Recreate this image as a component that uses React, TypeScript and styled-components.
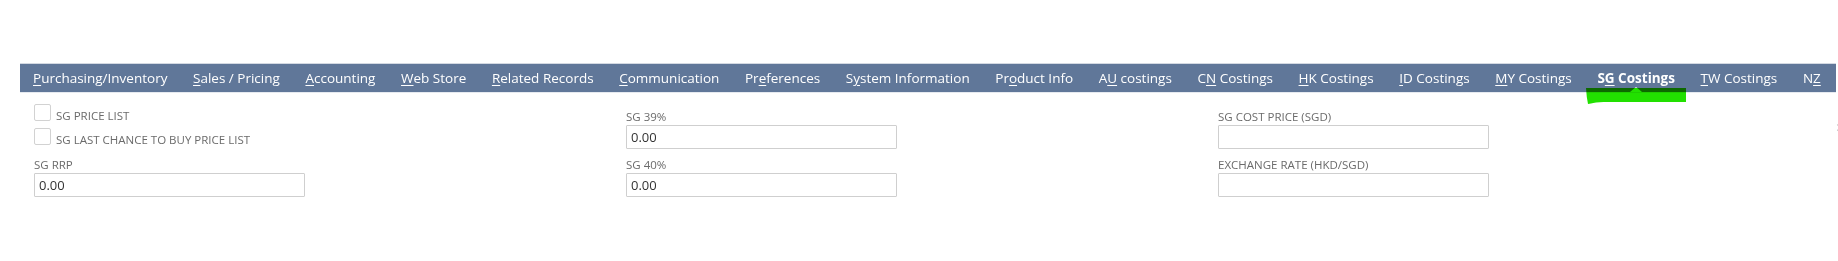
import styled, { createGlobalStyle } from "styled-components";

const GlobalStyle = createGlobalStyle`
  html, body {
    margin: 0;
    padding: 0;
    background: #fff;
    font-family: "Open Sans", "Liberation Sans", sans-serif;
  }
`;

// key = index of the access-key letter that gets underlined
const tabs: { label: string; key: number; active?: boolean }[] = [
  { label: "Purchasing/Inventory", key: 0 },
  { label: "Sales / Pricing", key: 0 },
  { label: "Accounting", key: 0 },
  { label: "Web Store", key: 0 },
  { label: "Related Records", key: 0 },
  { label: "Communication", key: 0 },
  { label: "Preferences", key: 2 },
  { label: "System Information", key: 1 },
  { label: "Product Info", key: 2 },
  { label: "AU costings", key: 1 },
  { label: "CN Costings", key: 1 },
  { label: "HK Costings", key: 0 },
  { label: "ID Costings", key: 0 },
  { label: "MY Costings", key: 0 },
  { label: "SG Costings", key: 1, active: true },
  { label: "TW Costings", key: 0 },
  { label: "NZ", key: 1 },
];

const App = () => {
  return (
    <>
      <GlobalStyle />
      <Page>
        <TabBar>
          {tabs.map((t) => (
            <Tab key={t.label} $active={t.active}>
              {t.label.slice(0, t.key)}
              <u>{t.label.charAt(t.key)}</u>
              {t.label.slice(t.key + 1)}
            </Tab>
          ))}
        </TabBar>

        <Form>
          <Column>
            <CheckRow>
              <CheckBox />
              <CheckLabel>SG PRICE LIST</CheckLabel>
            </CheckRow>
            <CheckRow>
              <CheckBox />
              <CheckLabel>SG LAST CHANCE TO BUY PRICE LIST</CheckLabel>
            </CheckRow>
            <Field $offset={5}>
              <FieldLabel>SG RRP</FieldLabel>
              <Input defaultValue="0.00" />
            </Field>
          </Column>

          <Column $padTop={5}>
            <Field>
              <FieldLabel>SG 39%</FieldLabel>
              <Input defaultValue="0.00" />
            </Field>
            <Field>
              <FieldLabel>SG 40%</FieldLabel>
              <Input defaultValue="0.00" />
            </Field>
          </Column>

          <Column $padTop={5}>
            <Field>
              <FieldLabel>SG COST PRICE (SGD)</FieldLabel>
              <Input defaultValue="" />
            </Field>
            <Field>
              <FieldLabel>EXCHANGE RATE (HKD/SGD)</FieldLabel>
              <Input defaultValue="" />
            </Field>
          </Column>
        </Form>

        <EdgeArrow>›</EdgeArrow>

        <Marker width="100" height="16" viewBox="0 0 100 16">
          <path d="M0 0 H100 V14 H22 Q10 13.5 5 15.5 L2 16 Q0.5 9 0 0 Z" fill="#22e000" />
        </Marker>
      </Page>
    </>
  );
};

export default App;

const Page = styled.div`
  position: relative;
  width: 1838px;
  height: 261px;
  padding-top: 63px;
  box-sizing: border-box;
  overflow: hidden;
`;

const TabBar = styled.div`
  display: flex;
  gap: 25.6px;
  margin: 0 2px 0 20px;
  padding-left: 13px;
  height: 28px;
  background: #607799;
  border-top: 1px solid #d3d9e2;
  border-bottom: 1px solid #e6eaf0;
  overflow: hidden;
  white-space: nowrap;
`;

const Tab = styled.div<{ $active?: boolean }>`
  position: relative;
  flex: none;
  padding-top: 1px;
  color: #fff;
  font-size: 13.5px;
  line-height: 27px;
  font-weight: ${(p) => (p.$active ? 700 : 400)};

  u {
    text-decoration-thickness: 1px;
    text-underline-offset: 2px;
  }

  &::after {
    content: "";
    display: ${(p) => (p.$active ? "block" : "none")};
    position: absolute;
    left: 50%;
    bottom: 0;
    margin-left: -6px;
    border-left: 6px solid transparent;
    border-right: 6px solid transparent;
    border-bottom: 5px solid #fff;
  }
`;

const Form = styled.div`
  display: grid;
  grid-template-columns: repeat(3, 592px);
  padding: 11px 0 0 34px;
`;

const Column = styled.div<{ $padTop?: number }>`
  display: flex;
  flex-direction: column;
  padding-top: ${(p) => p.$padTop || 0}px;
`;

const CheckRow = styled.div`
  display: flex;
  align-items: flex-start;
  gap: 5px;
  height: 16px;
  margin-bottom: 8px;
`;

const CheckBox = styled.span`
  width: 15px;
  height: 15px;
  border: 1px solid #d2d2d2;
  border-radius: 2px;
  background: #fff;
`;

const CheckLabel = styled.span`
  margin-top: 4px;
  font-size: 11.5px;
  line-height: 16px;
  color: #6b6b6b;
`;

const Field = styled.div<{ $offset?: number }>`
  display: flex;
  flex-direction: column;
  margin-top: ${(p) => p.$offset || 0}px;
  margin-bottom: 8px;
`;

const FieldLabel = styled.label`
  font-size: 11.5px;
  line-height: 16px;
  color: #6b6b6b;
`;

const Input = styled.input`
  width: 271px;
  height: 24px;
  box-sizing: border-box;
  border: 1px solid #cfcfcf;
  border-radius: 1px;
  padding: 0 4px;
  font-family: "Open Sans", "Liberation Sans", sans-serif;
  font-size: 13px;
  color: #333;
  outline: none;
`;

const EdgeArrow = styled.span`
  position: absolute;
  right: -3px;
  top: 115px;
  font-size: 16px;
  color: #c4c4c4;
`;

const Marker = styled.svg`
  position: absolute;
  left: 1586px;
  top: 88px;
  mix-blend-mode: multiply;
`;
